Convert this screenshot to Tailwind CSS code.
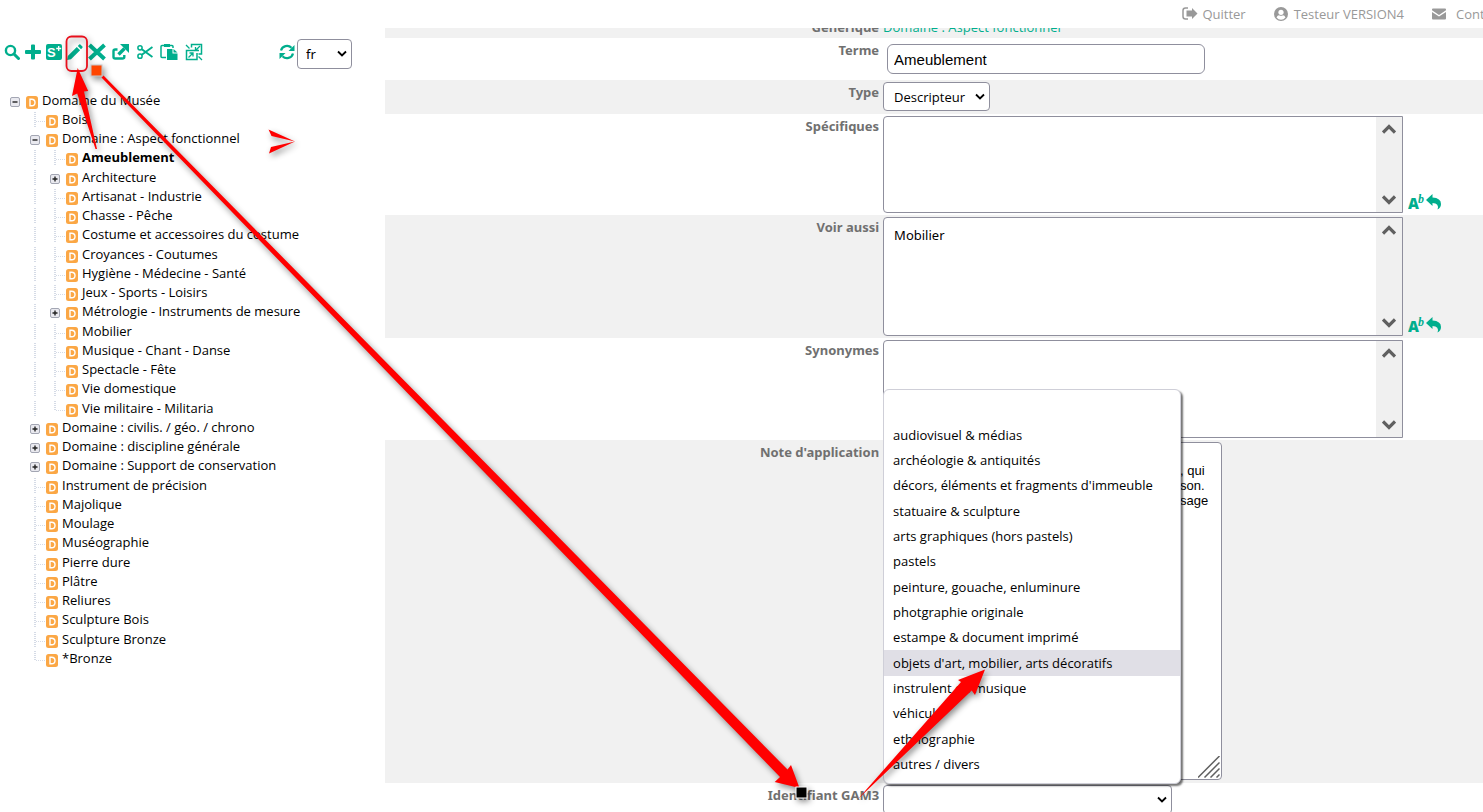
<!DOCTYPE html>
<html lang="fr">
<head>
  <meta charset="UTF-8">
  <meta name="viewport" content="width=device-width, initial-scale=1.0">
  <title>Thésaurus - Domaine du Musée</title>
  <script src="https://cdn.jsdelivr.net/npm/@tailwindcss/browser@4"></script>
</head>
<body class="relative h-screen overflow-hidden bg-white text-black font-['Noto_Sans',sans-serif] text-[13px] flex flex-col">

  <header class="h-7 shrink-0 flex justify-end items-center text-[#999] font-['Open_Sans',sans-serif] text-[13px] leading-[18px] whitespace-nowrap">
    <a href="#" class="flex items-center gap-1 mr-7">
      <svg class="w-4 h-4" viewBox="0 0 16 16" fill="none"><path d="M6 2H3.500Q1 2 1 4.500v6Q1 13 3.500 13H6" stroke="currentColor" stroke-width="1.500"/><path d="M4.500 4.500H10V2l5.500 5.500L10 13v-2.500H4.500z" fill="currentColor"/></svg>
      Quitter
    </a>
    <a href="#" class="flex items-center gap-1.5 mr-7">
      <svg class="w-3.5 h-3.5" viewBox="0 0 14 14"><circle cx="7" cy="7" r="7" fill="currentColor"/><circle cx="7" cy="5.300" r="2.600" fill="#fff"/><path d="M2.500 10.500q1-2.300 2.500-2.300 2 1.200 4 0 1.500 0 2.500 2.300-1.800 2.300-4.500 2.300t-4.500-2.300z" fill="#fff"/></svg>
      Testeur VERSION4
    </a>
    <a href="#" class="flex items-center gap-2.5 w-[51px] overflow-hidden">
      <svg class="w-3.5 h-3.5 shrink-0" viewBox="0 0 14 14" fill="currentColor"><path d="M0 2.500Q0 1.500 1 1.500h12q1 0 1 1v.8L7 8 0 3.300z"/><path d="M0 5l7 4.500L14 5v6.500q0 1-1 1H1q-1 0-1-1z"/></svg>
      Contact
    </a>
  </header>

  <div class="flex flex-1 min-h-0">
    <aside class="w-[385px] shrink-0 pl-1 pt-[11px]">
      <div class="flex items-start h-[52px] text-[#00ae8d]">
        <div class="flex items-center gap-[5px] pt-1 h-[22px]">
          <button type="button" aria-label="Rechercher"><svg class="w-4 h-4" viewBox="0 0 16 16" fill="none" stroke="currentColor"><circle cx="6.500" cy="6.500" r="4.600" stroke-width="2.400"/><path d="M10 10l4.500 4.500" stroke-width="3" stroke-linecap="round"/></svg></button>
          <button type="button" aria-label="Ajouter"><svg class="w-4 h-4" viewBox="0 0 16 16" fill="currentColor"><path d="M6 1.500q0-1 1-1h2q1 0 1 1V6h5q1 0 1 1v2q0 1-1 1h-5v4.500q0 1-1 1H7q-1 0-1-1V10H1q-1 0-1-1V7q0-1 1-1h5z"/></svg></button>
          <button type="button" aria-label="Ajouter un synonyme"><svg class="w-4 h-4" viewBox="0 0 16 16"><rect width="16" height="16" rx="2" fill="currentColor"/><text x="1" y="13" fill="#fff" font-family="Liberation Sans, sans-serif" font-weight="bold" font-size="13">S</text><path d="M12.700 2v5M10.200 4.500h5" stroke="#fff" stroke-width="1.300"/></svg></button>
          <button type="button" aria-label="Modifier"><svg class="w-4 h-4" viewBox="0 0 16 16" fill="currentColor"><path d="M0 16l.8-4L9.800 3l3.300 3.300L4 15.300zM10.800 2L12.200.6q.6-.6 1.200 0l2 2q.6.600 0 1.200L14 5.300z"/></svg></button>
          <button type="button" aria-label="Supprimer"><svg class="w-[18px] h-[18px]" viewBox="0 0 18 18" stroke="currentColor" stroke-width="4"><path d="M1.500 2l15 14M16.500 2l-15 14"/></svg></button>
        </div>
        <div class="flex items-center gap-[7px] pt-1 h-[22px] ml-[6px]">
          <button type="button" aria-label="Ouvrir"><svg class="w-[18px] h-[18px]" viewBox="0 0 18 18" fill="none" stroke="currentColor"><path d="M5.500 6.500H3.300q-1.800 0-1.800 1.500v6q0 1.500 1.800 1.500h7q2 0 2-1.500v-2" stroke-width="2.400"/><path d="M6.500 11.500l6-6" stroke-width="3.400"/><path d="M8 1h9v9z" fill="currentColor" stroke="none"/></svg></button>
          <button type="button" aria-label="Couper"><svg class="w-4 h-4" viewBox="0 0 16 16" fill="none" stroke="currentColor"><circle cx="3" cy="3.800" r="2.100" stroke-width="1.500"/><circle cx="3" cy="12.200" r="2.100" stroke-width="1.500"/><path d="M4.800 5.200L15.500 13M4.800 10.800L15.500 3" stroke-width="2"/></svg></button>
          <button type="button" aria-label="Coller"><svg class="w-[18px] h-[18px]" viewBox="0 0 18 18" fill="none"><path d="M6 14.500H2q-1 0-1-1V3.500q0-1 1-1h10q1 0 1 1V5" stroke="currentColor" stroke-width="1.500"/><path d="M4 1h6v3H4z" fill="currentColor"/><path d="M7 6h5.500v4.500h5V17H7zM13.500 6L17.500 9.500h-4z" fill="currentColor"/></svg></button>
          <button type="button" aria-label="Délier"><svg class="w-[18px] h-[18px]" viewBox="0 0 18 18" fill="none" stroke="currentColor" stroke-width="1.500"><path d="M6.500 4.500V1.500h10v9.500h-3M10 7.500H1.500v9H12V10"/><path d="M1 2l3.500 3.500M13.500 13.500L17 17M15 3l-4.500 4.500M10.500 4v3.500H14M3.500 14.500L8 10M4.500 10H8v3.500" stroke-width="1.300"/></svg></button>
        </div>
        <button type="button" aria-label="Actualiser" class="ml-[76px] pt-1 h-[22px]"><svg class="w-4 h-4" viewBox="0 0 16 16"><path d="M2 6.500a6.200 6.200 0 0 1 10.500-2.700M14 9.500a6.200 6.200 0 0 1-10.500 2.700" fill="none" stroke="currentColor" stroke-width="2.200"/><path d="M15.500 1v6h-6zM.5 15V9h6z" fill="currentColor"/></svg></button>
        <div class="inline-grid items-center ml-[2px] text-black">
          <select aria-label="Langue" class="col-start-1 row-start-1 appearance-none w-[55px] h-[30px] border border-[#8f8f9d] rounded pl-2 pt-0.5 bg-white">
            <option>fr</option>
          </select>
          <svg class="col-start-1 row-start-1 justify-self-end mr-[5px] w-2.5 h-2 pointer-events-none" viewBox="0 0 10 8" fill="none" stroke="#000" stroke-width="1.800"><path d="M1 1.500l4 4 4-4"/></svg>
        </div>
      </div>
      <ul id="tree" class="pl-px text-sm leading-snug font-['Open_Sans',sans-serif]"></ul>
    </aside>

    <main class="flex-1 min-w-0 overflow-hidden">
      <form class="flex flex-col -mt-[13px]">
        <div class="flex gap-1 h-[23px] bg-[#f1f1f1]">
          <span class="w-[45%] pt-[3px] text-right font-bold text-[#707070] leading-[18px]">Générique</span>
          <a href="#" class="pt-[3px] text-[#00ae8d] leading-[18px] font-['Open_Sans',sans-serif]">Domaine : Aspect fonctionnel</a>
        </div>
        <div class="flex gap-1 py-1.5">
          <label for="terme" class="w-[45%] -mt-[3px] text-right font-bold text-[#707070] leading-[18px]">Terme</label>
          <input id="terme" type="text" value="Ameublement" class="ml-1 w-[318px] h-[30px] border border-[#8f8f9d] rounded-md px-1.5 bg-white font-['Liberation_Sans',sans-serif] text-[15px]">
        </div>
        <div class="flex gap-1 pt-0.5 pb-[3px] bg-[#f1f1f1]">
          <label for="type" class="w-[45%] pt-px text-right font-bold text-[#707070] leading-[18px]">Type</label>
          <div class="inline-grid items-center">
            <select id="type" class="col-start-1 row-start-1 appearance-none w-[107px] h-[29px] border border-[#8f8f9d] rounded pl-2.5 pt-0.5 bg-white font-['Open_Sans',sans-serif]">
              <option>Descripteur</option>
            </select>
            <svg class="col-start-1 row-start-1 justify-self-end mr-[5px] w-2.5 h-2 pointer-events-none" viewBox="0 0 10 8" fill="none" stroke="#000" stroke-width="1.800"><path d="M1 1.500l4 4 4-4"/></svg>
          </div>
        </div>
        <div class="flex gap-1 py-0.5">
          <label for="specifiques" class="w-[45%] pt-px text-right font-bold text-[#707070] leading-[18px]">Spécifiques</label>
          <div class="flex w-[520px] h-[97px] border border-[#8f8f9d] rounded-l bg-white">
            <textarea id="specifiques" class="flex-1 resize-none px-2.5 py-2"></textarea>
            <div class="w-[26px] flex flex-col justify-between items-center py-1.5 bg-[#f0f0f0]">
              <svg class="w-3.5 h-3" viewBox="0 0 14 12" fill="none" stroke="#606060" stroke-width="3.200"><path d="M1 9.500l6-6 6 6"/></svg>
              <svg class="w-3.5 h-3" viewBox="0 0 14 12" fill="none" stroke="#606060" stroke-width="3.200"><path d="M1 2.500l6 6 6-6"/></svg>
            </div>
          </div>
          <button type="button" aria-label="Ajouter un spécifique" class="self-end ml-px text-[#00ae8d]"><svg class="w-[34px] h-5" viewBox="0 0 34 20" fill="currentColor"><text x="0" y="16" font-family="Noto Sans, sans-serif" font-weight="900" font-size="15">A</text><text x="10" y="10" font-family="Liberation Serif, serif" font-weight="bold" font-style="italic" font-size="12">b</text><path d="M18 7l6.500-6v3.500Q33 5 33 11q0 3.500-3.500 5.500Q31.500 10 24.500 10v3z"/></svg></button>
        </div>
        <div class="flex gap-1 py-0.5 bg-[#f1f1f1]">
          <label for="voir" class="w-[45%] pt-px text-right font-bold text-[#707070] leading-[18px]">Voir aussi</label>
          <div class="flex w-[520px] h-[119px] border border-[#8f8f9d] rounded-l bg-white">
            <textarea id="voir" class="flex-1 resize-none px-2.5 py-2 leading-[19px]">Mobilier</textarea>
            <div class="w-[26px] flex flex-col justify-between items-center py-1.5 bg-[#f0f0f0]">
              <svg class="w-3.5 h-3" viewBox="0 0 14 12" fill="none" stroke="#606060" stroke-width="3.200"><path d="M1 9.500l6-6 6 6"/></svg>
              <svg class="w-3.5 h-3" viewBox="0 0 14 12" fill="none" stroke="#606060" stroke-width="3.200"><path d="M1 2.500l6 6 6-6"/></svg>
            </div>
          </div>
          <button type="button" aria-label="Ajouter un terme associé" class="self-end ml-px text-[#00ae8d]"><svg class="w-[34px] h-5" viewBox="0 0 34 20" fill="currentColor"><text x="0" y="16" font-family="Noto Sans, sans-serif" font-weight="900" font-size="15">A</text><text x="10" y="10" font-family="Liberation Serif, serif" font-weight="bold" font-style="italic" font-size="12">b</text><path d="M18 7l6.500-6v3.500Q33 5 33 11q0 3.500-3.500 5.500Q31.500 10 24.500 10v3z"/></svg></button>
        </div>
        <div class="flex gap-1 py-0.5">
          <label for="synonymes" class="w-[45%] pt-px text-right font-bold text-[#707070] leading-[18px]">Synonymes</label>
          <div class="flex w-[520px] h-[98px] border border-[#8f8f9d] rounded-l bg-white">
            <textarea id="synonymes" class="flex-1 resize-none px-2.5 py-2"></textarea>
            <div class="w-[26px] flex flex-col justify-between items-center py-1.5 bg-[#f0f0f0]">
              <svg class="w-3.5 h-3" viewBox="0 0 14 12" fill="none" stroke="#606060" stroke-width="3.200"><path d="M1 9.500l6-6 6 6"/></svg>
              <svg class="w-3.5 h-3" viewBox="0 0 14 12" fill="none" stroke="#606060" stroke-width="3.200"><path d="M1 2.500l6 6 6-6"/></svg>
            </div>
          </div>
        </div>
        <div class="flex gap-1 pt-0.5 pb-[3px] bg-[#f1f1f1]">
          <label for="note" class="w-[45%] pt-px text-right font-bold text-[#707070] leading-[18px]">Note d'application</label>
          <div class="grid">
            <textarea id="note" class="col-start-1 row-start-1 resize-none w-[339px] h-[338px] border border-[#8f8f9d] rounded bg-white pl-[296px] pt-5 font-['Liberation_Sans',sans-serif] leading-[15px] whitespace-pre overflow-hidden">, qui
son.
sage</textarea>
            <svg class="col-start-1 row-start-1 self-end justify-self-end mr-0.5 mb-0.5 w-[22px] h-[22px]" viewBox="0 0 22 22" stroke="#606060" stroke-width="1.500"><path d="M0 21.500L21.500 0M6.500 21.500l15-15M12.500 21.500l9-9M18.500 21.500l3-3"/></svg>
          </div>
        </div>
        <div class="flex gap-1 pt-0.5">
          <label for="gam3" class="w-[45%] pt-px text-right font-bold text-[#707070] leading-[18px]">Identifiant GAM3</label>
          <div class="relative inline-grid items-center">
            <select id="gam3" class="col-start-1 row-start-1 appearance-none w-[289px] h-[29px] border border-[#8f8f9d] rounded pl-2.5 bg-white">
              <option></option>
            </select>
            <svg class="col-start-1 row-start-1 justify-self-end mr-[5px] w-2.5 h-2 pointer-events-none" viewBox="0 0 10 8" fill="none" stroke="#000" stroke-width="1.800"><path d="M1 1.500l4 4 4-4"/></svg>
            <ul id="gam3-list" role="listbox" aria-label="Identifiant GAM3" class="absolute left-0 bottom-full mb-px w-[298px] h-[395px] pt-[7px] pb-1.5 grid auto-rows-fr border border-[#cfcfd8] rounded-md bg-white shadow-[2px_2px_2px_rgba(0,0,0,0.55)] font-['Open_Sans',sans-serif]"></ul>
          </div>
        </div>
      </form>
    </main>
  </div>

  <!-- annotations -->
  <svg class="absolute left-0 top-0 w-[1483px] h-[812px] pointer-events-none drop-shadow-[2px_3px_3px_rgba(0,0,0,0.45)]" viewBox="0 0 1483 812">
    <rect x="66.500" y="36.500" width="20.500" height="34.500" rx="5" fill="none" stroke="#e8101c" stroke-width="1.800"/>
    <g fill="#ff0000">
      <path d="M77.700 68L72 96l5.200-2.500L95.500 149h1.500L84 91.500l4.200-.6z"/>
      <path d="M101.500 77.500L103.500 75.500 787.500 769.500l3.500-4.500 8.500 23-24.800-6 5.300-5z"/>
      <path d="M858 799L961 682l-3-2 27-10.500-10 25.500-3.300-4.500z"/>
      <path d="M268.500 129.500L295 141.500 271.500 136zM269 153.500L295 141.500 271 147z"/>
    </g>
    <rect x="91" y="65" width="11" height="11" fill="#ff4500" stroke="#c8c8c8"/>
    <rect x="796" y="787" width="11" height="11" fill="#000" stroke="#fff"/>
  </svg>

  <script>
    // [depth, label, state] : '-' open, '+' closed, 'end' last child
    const nodes = [
      [0, 'Domaine du Musée', '-'],
      [1, 'Bois'],
      [1, 'Domaine : Aspect fonctionnel', '-'],
      [2, 'Ameublement', 'current'],
      [2, 'Architecture', '+'],
      [2, 'Artisanat - Industrie'],
      [2, 'Chasse - Pêche'],
      [2, 'Costume et accessoires du costume'],
      [2, 'Croyances - Coutumes'],
      [2, 'Hygiène - Médecine - Santé'],
      [2, 'Jeux - Sports - Loisirs'],
      [2, 'Métrologie - Instruments de mesure', '+'],
      [2, 'Mobilier'],
      [2, 'Musique - Chant - Danse'],
      [2, 'Spectacle - Fête'],
      [2, 'Vie domestique'],
      [2, 'Vie militaire - Militaria', 'end'],
      [1, 'Domaine : civilis. / géo. / chrono', '+'],
      [1, 'Domaine : discipline générale', '+'],
      [1, 'Domaine : Support de conservation', '+'],
      [1, 'Instrument de précision'],
      [1, 'Majolique'],
      [1, 'Moulage'],
      [1, 'Muséographie'],
      [1, 'Pierre dure'],
      [1, 'Plâtre'],
      [1, 'Reliures'],
      [1, 'Sculpture Bois'],
      [1, 'Sculpture Bronze'],
      [1, '*Bronze', 'end']
    ];

    const line = (down, across) => `<svg class="w-5 h-[18px] shrink-0" viewBox="0 0 20 18" fill="none" stroke="#d5dbe6" stroke-dasharray="1 1"><path stroke-width="2" d="${down}"/><path d="${across}"/></svg>`;
    const lineDown = line('M10 1v16', '');
    const joint = line('M10 1v16', 'M11 10.500h9');
    const jointEnd = line('M10 1v10', 'M11 10.500h9');
    const toggle = (open) => `<button type="button" aria-label="${open ? 'Replier' : 'Déplier'}" class="w-5 h-[18px] shrink-0"><svg class="w-5 h-[18px]" viewBox="0 0 20 18"><rect x="5.500" y="5.500" width="9" height="9" rx="1.500" fill="#e9e9ef" stroke="#a3a6b3"/><path d="M7.500 10h5${open ? '' : 'M10 7.500v5'}" stroke="#222" stroke-width="1.400"/></svg></button>`;
    const badge = `<svg class="w-[17px] h-[18px] shrink-0" viewBox="0 0 17 18"><rect x="1" y="4" width="12" height="13" rx="2.500" fill="#fba745"/><path d="M5 7.200h1.600q3.400 0 3.400 3.300t-3.400 3.300H5z" fill="none" stroke="#fff" stroke-width="1.400"/></svg>`;

    document.getElementById('tree').innerHTML = nodes.map(([depth, label, state]) => {
      let cells = '';
      if (depth > 0) cells += '<span class="w-5 shrink-0"></span>';
      if (depth > 1) cells += lineDown;
      if (state === '-' || state === '+') cells += toggle(state === '-');
      else cells += state === 'end' ? jointEnd : joint;
      const text = state === 'current'
        ? `<a href="#" class="text-[13px] font-bold">${label}</a>`
        : `<a href="#" class="text-[13px]">${label}</a>`;
      return `<li class="flex items-center h-[1lh] whitespace-nowrap">${cells}${badge}${text}</li>`;
    }).join('');

    const gam3 = [
      '',
      'audiovisuel &amp; médias',
      'archéologie &amp; antiquités',
      "décors, éléments et fragments d'immeuble",
      'statuaire &amp; sculpture',
      'arts graphiques (hors pastels)',
      'pastels',
      'peinture, gouache, enluminure',
      'photgraphie originale',
      'estampe &amp; document imprimé',
      "objets d'art, mobilier, arts décoratifs",
      'instrulent de musique',
      'véhicule',
      'ethnographie',
      'autres / divers'
    ];
    document.getElementById('gam3-list').innerHTML = gam3.map((label, i) =>
      i === 10
        ? `<li role="option" aria-selected="true" class="flex items-center px-[9px] pt-px bg-[#e0dfe6]">${label}</li>`
        : `<li role="option" class="flex items-center px-[9px] pt-px">${label}</li>`
    ).join('');
  </script>
</body>
</html>
